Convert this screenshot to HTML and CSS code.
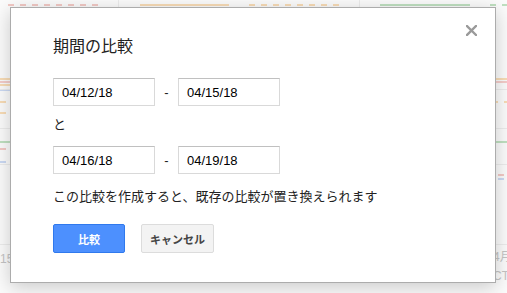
FILE: index.html
```html
<!DOCTYPE html>
<html lang="ja">
<head>
<meta charset="utf-8">
<title>期間の比較</title>
<link rel="stylesheet" href="styles.css">
</head>
<body>
<div class="page">
  <div class="chart" aria-hidden="true">
    <div class="ln dash pink" style="left:8px;top:4px;width:92px"></div>
    <div class="ln orange" style="left:140px;top:4px;width:89px"></div>
    <div class="ln dash orange-d" style="left:249px;top:4px;width:92px"></div>
    <div class="ln green" style="left:380px;top:4px;width:90px"></div>
    <div class="ln dash green-d" style="left:490px;top:4px;width:17px"></div>
    <div class="vl" style="left:118px"></div>
    <div class="vl" style="left:359px"></div>
    <div class="ln orange" style="left:0;top:78px;width:507px"></div>
    <div class="ln pink" style="left:0;top:81px;width:507px"></div>
    <div class="ln orange" style="left:0;top:84px;width:20px"></div>
    <div class="ln blue" style="left:0;top:89px;width:20px"></div>
    <div class="ln grey" style="left:0;top:89px;width:507px"></div>
    <div class="ln dash orange-d" style="left:0;top:101px;width:507px"></div>
    <div class="ln dash orange-d" style="left:0;top:112px;width:20px"></div>
    <div class="ln grey" style="left:0;top:128px;width:507px"></div>
    <div class="ln green" style="left:0;top:141px;width:507px"></div>
    <div class="ln dash pink" style="left:0;top:148px;width:20px"></div>
    <div class="ln dash blue" style="left:0;top:161px;width:20px"></div>
    <div class="ln grey" style="left:0;top:164px;width:507px"></div>
    <div class="ln dash pink" style="left:486px;top:174px;width:21px"></div>
    <div class="ln dash blue" style="left:486px;top:178px;width:21px"></div>
    <div class="ln grey" style="left:0;top:244px;width:507px"></div>
    <span class="lbl" style="left:0;top:253px">15</span>
    <span class="lbl" style="left:493px;top:251px">4月</span>
    <span class="lbl" style="left:493px;top:270px">CT</span>
  </div>

  <div class="dialog" role="dialog">
    <button class="close" aria-label="閉じる">
      <svg width="11" height="11" viewBox="0 0 11 11"><path d="M1 1L10 10M10 1L1 10" stroke="#9a9a9a" stroke-width="2.4" stroke-linecap="square"/></svg>
    </button>
    <h1 class="title">期間の比較</h1>
    <div class="range first">
      <input class="date" type="text" value="04/12/18">
      <span class="dash-sep">-</span>
      <input class="date" type="text" value="04/15/18">
    </div>
    <p class="and">と</p>
    <div class="range">
      <input class="date" type="text" value="04/16/18">
      <span class="dash-sep">-</span>
      <input class="date" type="text" value="04/19/18">
    </div>
    <p class="msg">この比較を作成すると、既存の比較が置き換えられます</p>
    <div class="actions">
      <button class="btn primary">比較</button>
      <button class="btn">キャンセル</button>
    </div>
  </div>
</div>
</body>
</html>
```

FILE: styles.css
```css
* { box-sizing: border-box; }
html, body { margin: 0; padding: 0; }
body {
  font-family: "Liberation Sans", Arial, "Noto Sans CJK JP", sans-serif;
  background: #fbfbfb;
  color: #222;
}
.page {
  position: relative;
  width: 507px;
  height: 293px;
  overflow: hidden;
}
.chart {
  position: absolute;
  inset: 0;
}
.ln {
  position: absolute;
  height: 2px;
}
.vl {
  position: absolute;
  top: 0;
  width: 1px;
  height: 8px;
  background: #ececec;
}
.pink { background: #f4cdca; }
.orange { background: #f8dcb6; }
.green { background: #bfe0c0; }
.blue { background: #cbd9f3; }
.grey { background: #ececec; height: 1px; }
.dash.pink { background: repeating-linear-gradient(90deg, #f2c9c5 0 6px, transparent 6px 12px); }
.dash.orange-d { background: repeating-linear-gradient(90deg, #f8dcb6 0 6px, transparent 6px 12px); }
.dash.green-d { background: repeating-linear-gradient(90deg, #bfe0c0 0 6px, transparent 6px 12px); }
.dash.blue { background: repeating-linear-gradient(90deg, #cbd9f3 0 6px, transparent 6px 12px); }
.lbl {
  position: absolute;
  font-size: 12px;
  color: #c4c4c4;
  line-height: 13px;
  white-space: nowrap;
}

.dialog {
  position: absolute;
  left: 10px;
  top: 7px;
  width: 486px;
  height: 276px;
  background: #fff;
  border: 1px solid #acacac;
  box-shadow: 0 4px 18px rgba(0, 0, 0, 0.2);
  padding: 29px 42px 0 42px;
}
.close {
  position: absolute;
  right: 18px;
  top: 17px;
  width: 11px;
  height: 11px;
  padding: 0;
  border: 0;
  background: none;
  display: flex;
}
.title {
  margin: 0;
  font-size: 16px;
  font-weight: normal;
  line-height: 20px;
  color: #222;
}
.range {
  display: flex;
  align-items: center;
  margin-top: 12px;
}
.range.first { margin-top: 21px; }
.date {
  width: 102px;
  height: 28px;
  border: 1px solid #d9d9d9;
  border-top-color: #c0c0c0;
  padding: 0 8px;
  font-family: "Liberation Sans", Arial, sans-serif;
  font-size: 13px;
  color: #000;
  background: #fff;
  margin: 0;
  outline: none;
}
.dash-sep {
  width: 23px;
  text-align: center;
  font-size: 13px;
  color: #222;
}
.and {
  margin: 10px 0 0;
  font-size: 13px;
  line-height: 18px;
}
.msg {
  margin: 14px 0 0;
  font-size: 13px;
  line-height: 18px;
}
.actions {
  display: flex;
  gap: 16px;
  margin-top: 18px;
}
.btn {
  height: 29px;
  min-width: 73px;
  padding: 0 8px;
  border: 1px solid #dcdcdc;
  border-radius: 2px;
  background: #f3f3f3;
  color: #444;
  font-family: "Liberation Sans", Arial, "Noto Sans CJK JP", sans-serif;
  font-size: 11px;
  font-weight: bold;
}
.btn.primary {
  width: 72px;
  min-width: 72px;
  background: #4d90fe;
  border-color: #3079ed;
  color: #fff;
}
```
